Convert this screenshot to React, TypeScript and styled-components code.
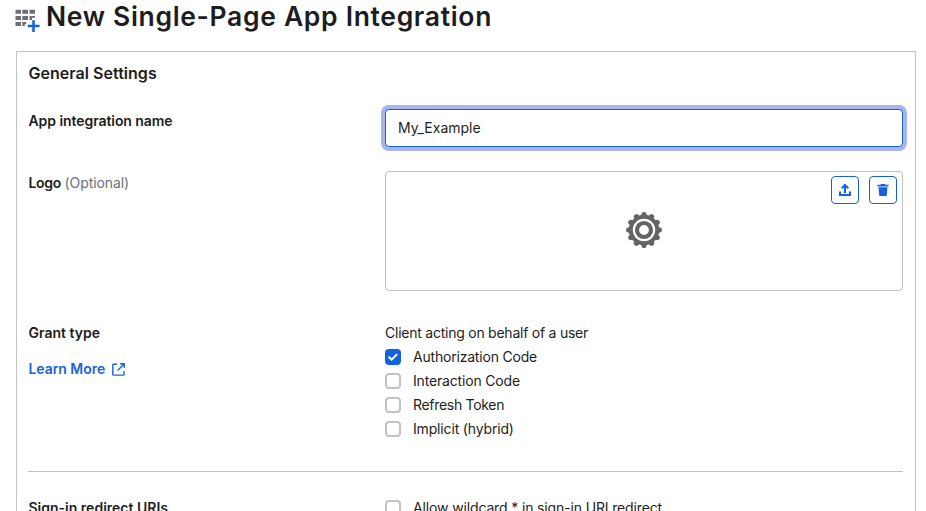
import React from 'react';
import styled, { createGlobalStyle } from 'styled-components';

const blue = '#1662dd';
const line = '#c1c1c8';
const ink = '#1d1d21';

const GlobalStyle = createGlobalStyle`
  * { box-sizing: border-box; }
  html, body { margin: 0; height: 100%; overflow: hidden; background: #fff; }
  body { font: 400 14px/24px Inter, "Liberation Sans", sans-serif; color: ${ink}; }
`;

const Page = styled.main`
  width: 926px;
  height: 511px;
  padding: 0 10px 0 16px;
  overflow: hidden;
`;
const Header = styled.header`
  display: flex;
  height: 51px;
`;
const AppIcon = styled.svg`
  width: 25px;
  height: 24px;
  margin: 8px 6px 0 -1px;
`;
const Title = styled.h1`
  margin: 0;
  font-size: 26.5px;
  font-weight: 600;
  line-height: 32px;
  white-space: nowrap;
`;
const Text = styled.span<{ $track?: number }>`
  letter-spacing: ${p => p.$track ?? 0}px;
  white-space: nowrap;
`;
const Panel = styled.section`
  height: 600px;
  border: 1px solid ${line};
  padding: 9px 12px 0 11px;
`;
const SectionTitle = styled.h2`
  margin: 0 0 23px 0.5px;
  height: 25px;
  font-size: 16px;
  font-weight: 600;
  line-height: 25px;
`;
const Row = styled.div<{ $height: number }>`
  display: grid;
  grid-template-columns: 357px 518px;
  height: ${p => p.$height}px;
`;
const Label = styled.div`
  padding-left: 0.5px;
  font-weight: 600;
`;
const Optional = styled.span`
  font-weight: 400;
  color: #6e6e78;
`;
const NameInput = styled.input`
  width: 518px;
  height: 38px;
  padding: 0 12px 1px;
  border: 1px solid ${blue};
  border-radius: 4px;
  outline: 0;
  box-shadow: 0 0 0 4px #a7b5ec;
  background: #fff;
  color: ${ink};
  font: inherit;
`;
const LogoBox = styled.div`
  display: grid;
  place-items: center;
  position: relative;
  height: 120px;
  padding-bottom: 2px;
  border: 1px solid ${line};
  border-radius: 4px;
`;
const Actions = styled.div`
  position: absolute;
  top: 4px;
  right: 5px;
  display: flex;
  gap: 10px;
`;
const ActionButton = styled.button`
  display: grid;
  place-items: center;
  width: 28px;
  height: 28px;
  padding: 0;
  border: 1px solid ${blue};
  border-radius: 4px;
  background: #fff;
  color: ${blue};
`;
const LearnMore = styled.a`
  display: flex;
  align-items: center;
  gap: 7px;
  margin-top: 12px;
  color: ${blue};
  text-decoration: none;
`;
const Option = styled.label`
  display: flex;
  align-items: center;
  gap: 12px;
  height: 24px;
`;
const Box = styled.span<{ $checked?: boolean }>`
  display: grid;
  place-items: center;
  flex: none;
  width: 16px;
  height: 16px;
  border: 2px solid ${p => (p.$checked ? blue : line)};
  border-radius: 4px;
  background: ${p => (p.$checked ? blue : '#fff')};
`;
const Divider = styled.hr`
  height: 1px;
  margin: 0 0 24px;
  border: 0;
  background: ${line};
`;

const GridPlus = () => (
  <AppIcon viewBox="0 0 25 24">
    <path fill="#6e6e78" d="M.5 1.700h5.500v4H.5zM7.300 1.700h5.700v4H7.300zM14.500 1.700H20v4h-5.500zM.5 8H6v4H.5zM7.300 8H13v4H7.300zM14.500 8H20v1.800h-3V12h-2.500zM.5 14H6v4H.5zM7.300 14h4v2h-1.500v2H7.300z" />
    <path stroke={blue} strokeWidth="2.600" d="M18.500 12.300V24M12.800 18h11.700" />
  </AppIcon>
);

const Gear = () => (
  <svg width="36" height="36" viewBox="-18 -18 36 36">
    {Array.from({ length: 12 }, (_, i) => (
      <path key={i} d="M-3.200-14L-1.900-17.400Q0-18.400 1.900-17.400L3.200-14z" fill="#646464" transform={`rotate(${i * 30})`} />
    ))}
    <circle r="13.200" fill="none" stroke="#646464" strokeWidth="4" />
    <circle r="7" fill="none" stroke="#646464" strokeWidth="4.200" />
  </svg>
);

const Upload = () => (
  <svg width="14" height="14" viewBox="0 0 14 14" fill="none" stroke="currentColor" strokeWidth="2">
    <path d="M2 8.500v3.500h10V8.500M7 10V3" />
    <path d="M3.700 5.300L7 2l3.300 3.300" />
  </svg>
);
const Trash = () => (
  <svg width="12" height="14" viewBox="0 0 12 14" fill="currentColor">
    <path d="M.5 1.800h3l.7-.9h3.600l.7.9h3v1.600H.5zM1.500 4.200h9l-.8 8.700H2.300z" />
  </svg>
);
const External = () => (
  <svg width="13" height="13" viewBox="0 0 13 13" fill="none" stroke="currentColor" strokeWidth="1.400">
    <path d="M5 1.300H1.500Q.8 1.300.8 2v9.400q0 .7.7.7h9.800q.7 0 .7-.7V8M8 .8h4.200V5M12 1L5.600 7.400" />
  </svg>
);
const Tick = () => (
  <svg width="12" height="12" viewBox="0 0 12 12" fill="none" stroke="#fff" strokeWidth="2">
    <path d="M1.600 5.700l3 3 5.600-5.600" />
  </svg>
);

const grants = [
  { name: 'Authorization Code', checked: true, track: -0.2 },
  { name: 'Interaction Code', track: -0.17 },
  { name: 'Refresh Token', track: -0.3 },
  { name: 'Implicit (hybrid)', track: -0.16 },
];

export default function App() {
  return (
    <>
      <GlobalStyle />
      <Page>
        <Header>
          <GridPlus />
          <Title><Text $track={0.67}>New Single-Page App Integration</Text></Title>
        </Header>
        <Panel>
          <SectionTitle><Text $track={0.03}>General Settings</Text></SectionTitle>
          <Row $height={62}>
            <Label><Text $track={-0.07}>App integration name</Text></Label>
            <NameInput defaultValue="My_Example" />
          </Row>
          <Row $height={150}>
            <Label><Text $track={-0.3}>Logo</Text> <Optional><Text $track={-0.08}>(Optional)</Text></Optional></Label>
            <LogoBox>
              <Gear />
              <Actions>
                <ActionButton aria-label="Upload logo"><Upload /></ActionButton>
                <ActionButton aria-label="Delete logo"><Trash /></ActionButton>
              </Actions>
            </LogoBox>
          </Row>
          <Row $height={150}>
            <Label>
              <Text>Grant type</Text>
              <LearnMore><Text $track={-0.05}>Learn More</Text><External /></LearnMore>
            </Label>
            <div>
              <Text $track={-0.24}>Client acting on behalf of a user</Text>
              {grants.map(g => (
                <Option key={g.name}>
                  <Box $checked={g.checked}>{g.checked && <Tick />}</Box>
                  <Text $track={g.track}>{g.name}</Text>
                </Option>
              ))}
            </div>
          </Row>
          <Divider />
          <Row $height={60}>
            <Label><Text>Sign-in redirect URIs</Text></Label>
            <Option>
              <Box />
              <Text $track={-0.14}>Allow wildcard * in sign-in URI redirect</Text>
            </Option>
          </Row>
        </Panel>
      </Page>
    </>
  );
}
